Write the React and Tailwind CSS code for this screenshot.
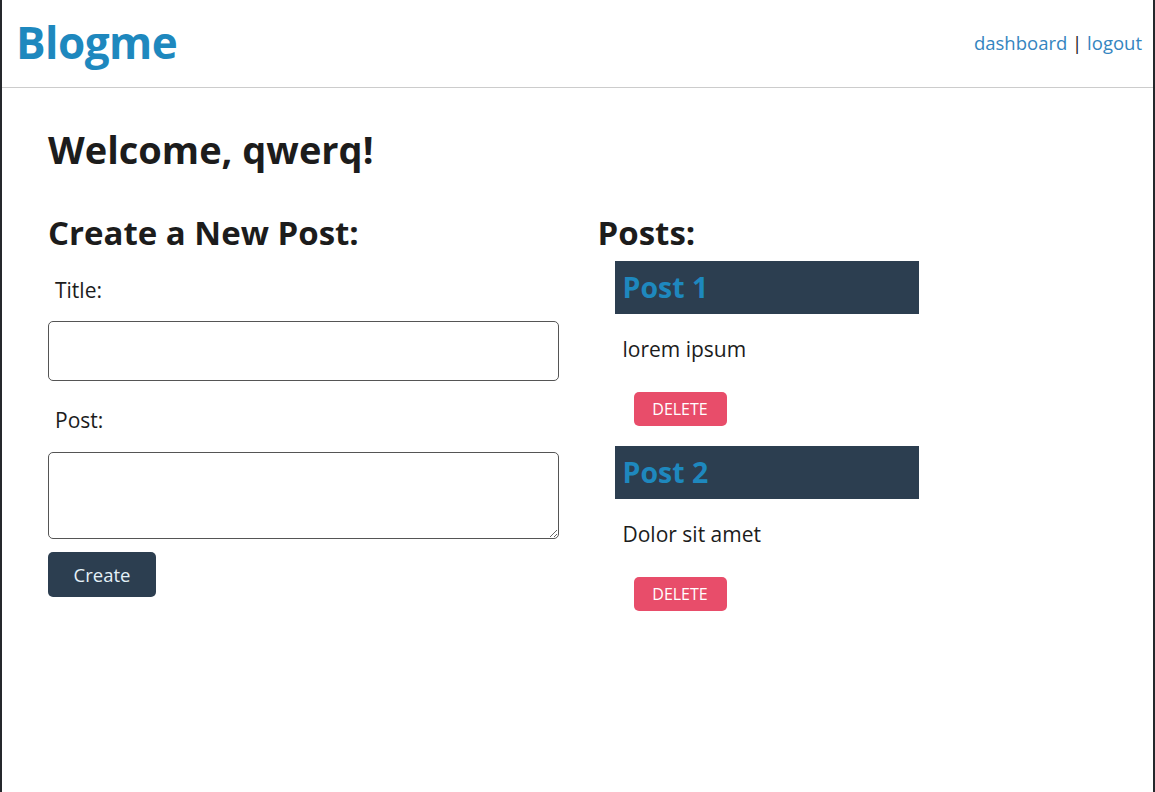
const posts = [
  { id: 1, title: "Post 1", body: "lorem ipsum" },
  { id: 2, title: "Post 2", body: "Dolor sit amet" },
];

const PostCard = ({ post }) => {
  return (
    <div className="w-[304px] ml-[17px]">
      <div className="h-[53px] bg-[#2c3e50] px-2 flex items-center">
        <h3 className="text-[28.5px] font-bold text-[#1e88be] leading-none">{post.title}</h3>
      </div>
      <p className="px-2 mt-[21px] text-[21px] leading-[28px] text-[#1c1c1c]">{post.body}</p>
      <button className="ml-[19px] mt-[29px] mb-[20px] w-[93px] h-[34px] rounded-[5px] bg-[#e84d6a] text-white text-[16px]">
        DELETE
      </button>
    </div>
  );
};

export default function App() {
  return (
    <div
      className="min-h-[792px] bg-white border-l-2 border-r-2 border-[#25282c] text-[#1c1c1c]"
      style={{ fontFamily: '"Open Sans", "Noto Sans", sans-serif' }}
    >
      <header className="h-[88px] border-b border-[#cccccc] flex items-center justify-between pl-[14px] pr-[11px]">
        <h1 className="text-[44px] font-bold text-[#1e88be] tracking-[-0.5px] -mt-[4px]">Blogme</h1>
        <nav className="text-[18.5px] text-[#3485c0] -mt-[2px]">
          <a href="#">dashboard</a>
          <span className="text-[#1c1c1c]"> | </span>
          <a href="#">logout</a>
        </nav>
      </header>

      <main className="px-[46px] pt-[33px]">
        <h1 className="text-[38px] font-bold leading-[56px]">Welcome, qwerq!</h1>

        <div className="grid grid-cols-2 gap-10 mt-[33px]">
          <section>
            <h2 className="text-[33px] font-bold leading-[46px]">Create a New Post:</h2>
            <form className="flex flex-col">
              <label className="ml-[7px] mt-[20px] text-[21px] leading-[28px]">Title:</label>
              <input className="mt-[17px] h-[60px] w-[511px] border border-[#555] rounded-[5px] px-3" type="text" />
              <label className="ml-[7px] mt-[25px] text-[21px] leading-[28px]">Post:</label>
              <textarea className="mt-[18px] h-[87px] w-[511px] border border-[#555] rounded-[5px] px-3" />
              <button
                type="button"
                className="mt-[13px] w-[108px] h-[45px] rounded-[5px] bg-[#2c3e50] text-[#e4f1f8] text-[18.5px]"
              >
                Create
              </button>
            </form>
          </section>

          <section>
            <h2 className="text-[33px] font-bold leading-[46px]">Posts:</h2>
            <div className="mt-[5px]">
              {posts.map((post) => (
                <PostCard key={post.id} post={post} />
              ))}
            </div>
          </section>
        </div>
      </main>
    </div>
  );
}
